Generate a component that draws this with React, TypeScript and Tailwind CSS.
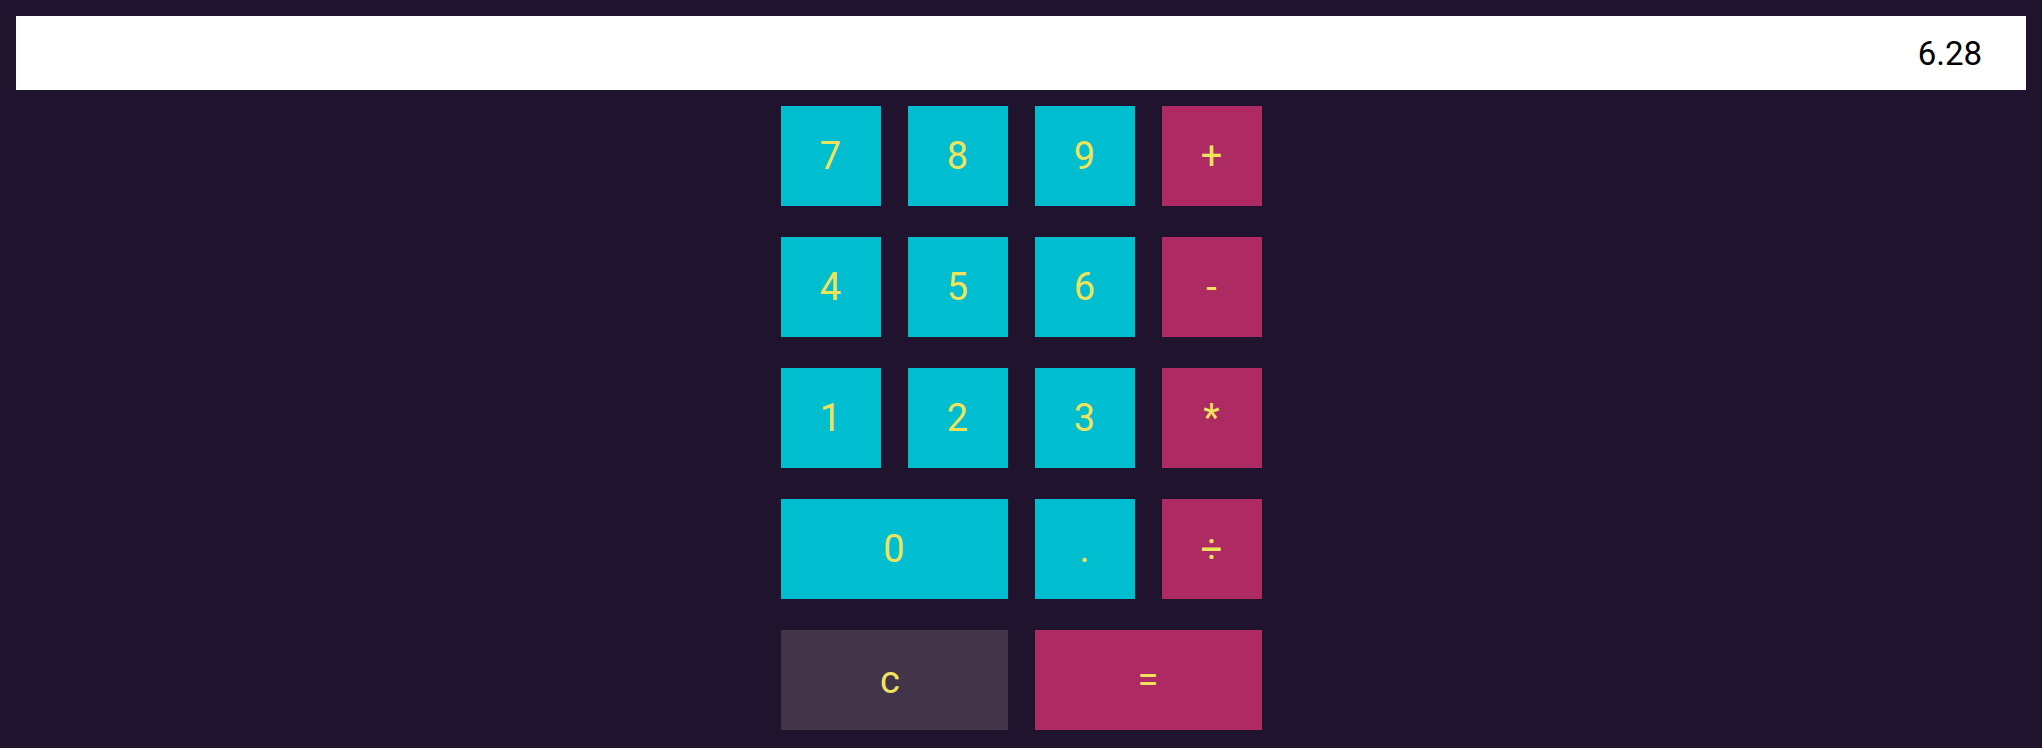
import React from "react";

type Key = { label: string; kind: "num" | "op" | "clear"; wide?: boolean };

const keys: Key[] = [
    { label: "7", kind: "num" },
    { label: "8", kind: "num" },
    { label: "9", kind: "num" },
    { label: "+", kind: "op" },
    { label: "4", kind: "num" },
    { label: "5", kind: "num" },
    { label: "6", kind: "num" },
    { label: "-", kind: "op" },
    { label: "1", kind: "num" },
    { label: "2", kind: "num" },
    { label: "3", kind: "num" },
    { label: "*", kind: "op" },
    { label: "0", kind: "num", wide: true },
    { label: ".", kind: "num" },
    { label: "÷", kind: "op" },
    { label: "c", kind: "clear", wide: true },
    { label: "=", kind: "op", wide: true },
];

const kindClass: Record<Key["kind"], string> = {
    num: "bg-[#00bdd0]",
    op: "bg-[#ad2a62]",
    clear: "bg-[#42354a] pr-2",
};

export default function App() {
    return (
        <div className="min-h-screen w-full bg-[#20132d] pt-4 font-['Roboto',sans-serif]">
            {/* Display */}
            <div className="mx-4 h-[74px] bg-white flex items-center justify-end pr-[44px]">
                <span className="text-[33px] text-black leading-none">6.28</span>
            </div>

            {/* Keypad */}
            <div className="mt-4 flex justify-center">
                <div className="grid grid-cols-[repeat(4,100px)] auto-rows-[100px] gap-x-[27px] gap-y-[31px]">
                    {keys.map((k) => (
                        <button
                            key={k.label}
                            className={`${kindClass[k.kind]} ${k.wide ? "col-span-2" : ""} flex items-center justify-center text-[38px] text-[#f0e35c] leading-none`}
                        >
                            {k.label}
                        </button>
                    ))}
                </div>
            </div>
        </div>
    );
}
